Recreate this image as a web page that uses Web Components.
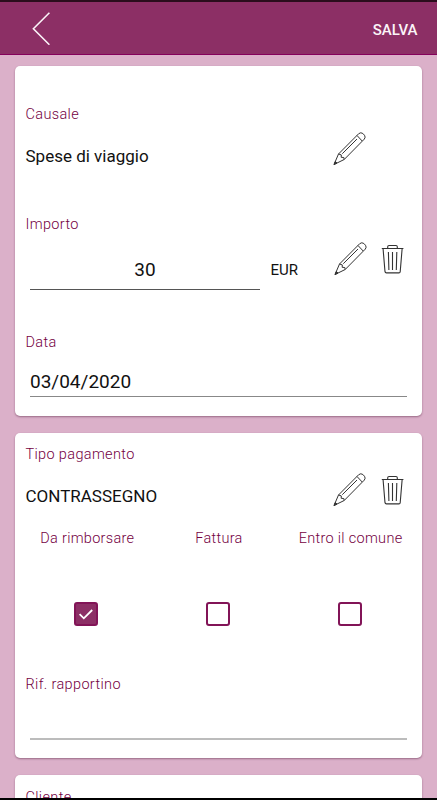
<!DOCTYPE html>
<html lang="it">
<head>
<meta charset="utf-8">
<meta name="viewport" content="width=device-width, initial-scale=1">
<title>Nota spese</title>
<style>
  html, body {
    margin: 0;
    height: 100%;
    overflow: hidden;
  }

  body {
    --color-primary: #8c2f65;
    --color-primary-dark: #85005b;
    --color-label: #74003f;
    --color-bg: #dbb0c9;
    --color-text: #111;
    font-family: Roboto, "Liberation Sans", sans-serif;
    color: var(--color-text);
  }
</style>
</head>
<body>
<expense-page>
  <app-header slot="header">SALVA</app-header>

  <form-card style="height: 350px; --card-top: 39px">
    <form-label>Causale</form-label>
    <value-row style="height: 90px; --text-top: 19px; --icon-top: 7px">
      Spese di viaggio
      <app-icon slot="edit" name="pencil"></app-icon>
    </value-row>
    <form-label>Importo</form-label>
    <value-row style="height: 98px; --text-top: 0px; --icon-top: 7px; --text-left: 0px; --icon-left: 1px">
      <line-field style="height: 55px; width: 230px; --field-top: 23px; --field-align: center; --line-color: #555">30</line-field>
      <span slot="unit">EUR</span>
      <app-icon slot="edit" name="pencil"></app-icon>
      <app-icon slot="remove" name="trash"></app-icon>
    </value-row>
    <form-label>Data</form-label>
    <line-field style="height: 44px; --field-top: 17px">03/04/2020</line-field>
  </form-card>

  <form-card style="height: 325px; --card-top: 12px">
    <form-label>Tipo pagamento</form-label>
    <value-row style="height: 64px; --text-top: 19px; --icon-top: 8px">
      CONTRASSEGNO
      <app-icon slot="edit" name="pencil"></app-icon>
      <app-icon slot="remove" name="trash"></app-icon>
    </value-row>
    <check-group>
      <check-item checked>Da rimborsare</check-item>
      <check-item>Fattura</check-item>
      <check-item>Entro il comune</check-item>
    </check-group>
    <form-label>Rif. rapportino</form-label>
    <line-field style="height: 45px; --line-width: 2px; --line-color: #bcbcbc"></line-field>
  </form-card>

  <form-card style="height: 100px; --card-top: 13px">
    <form-label>Cliente</form-label>
  </form-card>
</expense-page>

<script>
class ExpensePage extends HTMLElement {
  constructor() {
    super();
    this.attachShadow({ mode: 'open' });
  }

  connectedCallback() {
    this.shadowRoot.innerHTML = `
      <style>
        :host {
          display: flex;
          flex-direction: column;
          box-sizing: border-box;
          height: 100vh;
          border-top: 2px solid #2b0d1c;
          border-bottom: 2px solid #000;
          background: var(--color-bg);
        }

        main {
          flex: 1;
          min-height: 0;
          overflow: hidden;
          display: flex;
          flex-direction: column;
          gap: 17px;
          padding: 11px 14.6px 0 15px;
        }
      </style>
      <slot name="header"></slot>
      <main><slot></slot></main>
    `;
  }
}

class AppHeader extends HTMLElement {
  constructor() {
    super();
    this.attachShadow({ mode: 'open' });
  }

  connectedCallback() {
    this.shadowRoot.innerHTML = `
      <style>
        :host {
          display: flex;
          flex: none;
          justify-content: space-between;
          align-items: center;
          box-sizing: border-box;
          height: 53px;
          padding: 0 19.5px 0 32px;
          background: var(--color-primary);
          border-bottom: 1px solid var(--color-primary-dark);
        }

        button {
          border: 0;
          padding: 0;
          background: none;
          color: #fbf4f8;
          font: 500 15px/20px Roboto, "Liberation Sans", sans-serif;
        }

        .action {
          padding-top: 3px;
        }

        svg {
          display: block;
        }
      </style>
      <button aria-label="Indietro">
        <svg width="20" height="34" viewBox="0 0 20 34" fill="none" stroke="#fbf4f8" stroke-width="1.6">
          <path d="M17.4 1.7L1.4 17.7L17.4 33.7"/>
        </svg>
      </button>
      <button class="action"><slot></slot></button>
    `;
  }
}

class FormCard extends HTMLElement {
  constructor() {
    super();
    this.attachShadow({ mode: 'open' });
  }

  connectedCallback() {
    this.shadowRoot.innerHTML = `
      <style>
        :host {
          display: flex;
          flex: none;
          flex-direction: column;
          box-sizing: border-box;
          padding: var(--card-top) 0 0;
          background: #fff;
          border-radius: 5px;
          box-shadow: 0 1px 2px rgb(70 20 50 / 0.45);
        }
      </style>
      <slot></slot>
    `;
  }
}

class FormLabel extends HTMLElement {
  constructor() {
    super();
    this.attachShadow({ mode: 'open' });
  }

  connectedCallback() {
    this.shadowRoot.innerHTML = `
      <style>
        :host {
          display: block;
          padding-left: 10.5px;
          font-size: 14.5px;
          font-weight: 300;
          line-height: 20px;
          letter-spacing: 0.35px;
          color: var(--color-label);
        }
      </style>
      <slot></slot>
    `;
  }
}

/* Value on the left, optional unit, then the edit and remove icons */
class ValueRow extends HTMLElement {
  constructor() {
    super();
    this.attachShadow({ mode: 'open' });
  }

  connectedCallback() {
    this.shadowRoot.innerHTML = `
      <style>
        :host {
          display: grid;
          grid-template-columns: 245px 73px 48px 1fr;
          align-items: start;
          font-size: 17px;
          line-height: 24px;
        }

        .value {
          padding: var(--text-top) 0 0 var(--text-left, 10.5px);
        }

        .unit {
          padding: 25px 0 0 10.5px;
          font-size: 15px;
          line-height: 20px;
        }

        .icon {
          padding-top: var(--icon-top);
        }

        .edit {
          padding-left: var(--icon-left, 0);
        }
      </style>
      <div class="value"><slot></slot></div>
      <div class="unit"><slot name="unit"></slot></div>
      <div class="icon edit"><slot name="edit"></slot></div>
      <div class="icon"><slot name="remove"></slot></div>
    `;
  }
}

class LineField extends HTMLElement {
  constructor() {
    super();
    this.attachShadow({ mode: 'open' });
  }

  connectedCallback() {
    this.shadowRoot.innerHTML = `
      <style>
        :host {
          display: block;
          box-sizing: border-box;
          margin: 0 15px;
          padding-top: var(--field-top, 0);
          border-bottom: var(--line-width, 1px) solid var(--line-color, #888);
          font-size: 19px;
          line-height: 24px;
          text-align: var(--field-align, left);
        }
      </style>
      <slot></slot>
    `;
  }
}

class CheckGroup extends HTMLElement {
  constructor() {
    super();
    this.attachShadow({ mode: 'open' });
  }

  connectedCallback() {
    this.shadowRoot.innerHTML = `
      <style>
        :host {
          display: grid;
          grid-template-columns: repeat(3, 1fr);
          height: 146px;
          padding: 0 6px 0 6.5px;
        }
      </style>
      <slot></slot>
    `;
  }
}

class CheckItem extends HTMLElement {
  constructor() {
    super();
    this.attachShadow({ mode: 'open' });
  }

  connectedCallback() {
    this.shadowRoot.innerHTML = `
      <style>
        :host {
          display: flex;
          flex-direction: column;
          align-items: center;
          gap: 53px;
          font-size: 14.5px;
          font-weight: 300;
          line-height: 20px;
          letter-spacing: 0.3px;
          white-space: nowrap;
          color: var(--color-label);
        }

        .box {
          box-sizing: border-box;
          width: 24px;
          height: 24px;
          margin-right: 2px;
          border: 2px solid #821457;
          border-radius: 3px;
        }

        :host([checked]) .box {
          background: var(--color-primary);
        }

        svg {
          display: none;
        }

        :host([checked]) svg {
          display: block;
        }
      </style>
      <span><slot></slot></span>
      <div class="box">
        <svg width="20" height="20" viewBox="0 0 20 20" fill="none" stroke="#fff" stroke-width="1.8">
          <path d="M3.6 10.2L7.8 14.3L16.2 6"/>
        </svg>
      </div>
    `;
  }
}

const ICONS = {
  pencil: `
    <svg width="34" height="34" viewBox="0 0 34 34" fill="none" stroke="#333" stroke-width="1" stroke-linejoin="round">
      <path d="M1 32.5L5.5 22L25.7 1.7Q27.8 -0.1 29.9 1.5L31.5 3.3Q32.9 5.2 31.3 7.1L11.2 27.5Z"/>
      <path d="M5.5 22L8.3 22.9L8.2 25.3L10.8 25.5L11.2 27.5M24 3.5L29.2 9M9.3 21.7L24 7"/>
      <path d="M1 32.5L2.3 29.5L4 31.1Z" fill="#333"/>
    </svg>`,
  trash: `
    <svg width="24" height="34" viewBox="0 0 24 34" fill="none" stroke="#333" stroke-width="1.1">
      <path d="M0.8 5.5H22.4M6.7 5.5V3.8Q6.7 2.5 8 2.5H15Q16.3 2.5 16.3 3.8V5.5"/>
      <path d="M2.1 6L4 28.7Q4.2 29.9 5.4 29.9H17.9Q19.1 29.9 19.2 28.7L21.1 6"/>
      <path d="M7.4 9L7.9 27M11.5 9V27M15.8 9L15.3 27"/>
    </svg>`
};

class AppIcon extends HTMLElement {
  constructor() {
    super();
    this.attachShadow({ mode: 'open' });
  }

  connectedCallback() {
    this.shadowRoot.innerHTML = `
      <style>
        :host {
          display: block;
        }

        :host([name="trash"]) {
          padding-top: 0.5px;
        }

        svg {
          display: block;
        }
      </style>
      ${ICONS[this.getAttribute('name')] || ''}
    `;
  }
}

customElements.define('expense-page', ExpensePage);
customElements.define('app-header', AppHeader);
customElements.define('form-card', FormCard);
customElements.define('form-label', FormLabel);
customElements.define('value-row', ValueRow);
customElements.define('line-field', LineField);
customElements.define('check-group', CheckGroup);
customElements.define('check-item', CheckItem);
customElements.define('app-icon', AppIcon);
</script>
</body>
</html>
